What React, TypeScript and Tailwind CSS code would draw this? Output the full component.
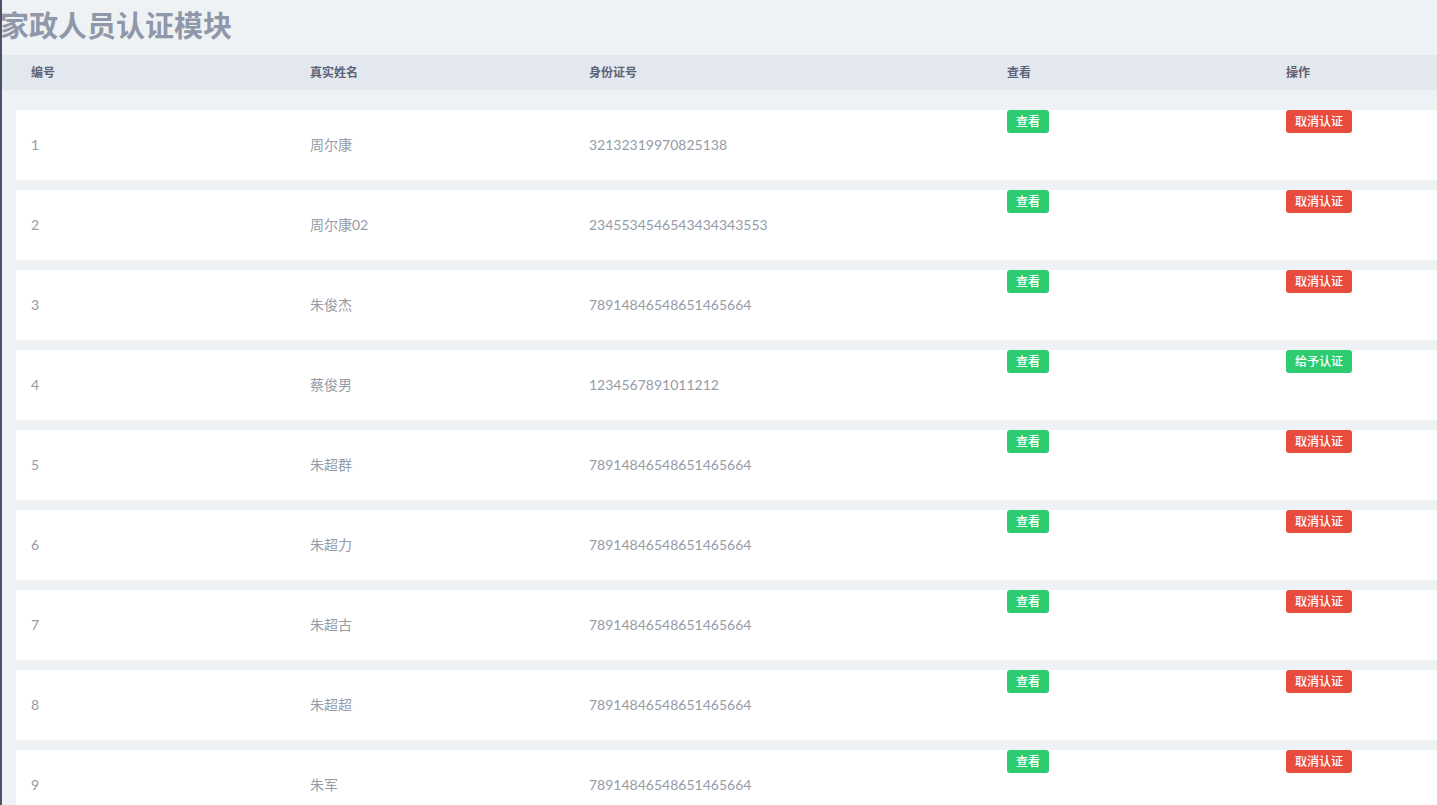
const rows = [
  { id: 1, name: '周尔康', card: '32132319970825138', ok: true },
  { id: 2, name: '周尔康02', card: '2345534546543434343553', ok: true },
  { id: 3, name: '朱俊杰', card: '78914846548651465664', ok: true },
  { id: 4, name: '蔡俊男', card: '1234567891011212', ok: false },
  { id: 5, name: '朱超群', card: '78914846548651465664', ok: true },
  { id: 6, name: '朱超力', card: '78914846548651465664', ok: true },
  { id: 7, name: '朱超古', card: '78914846548651465664', ok: true },
  { id: 8, name: '朱超超', card: '78914846548651465664', ok: true },
  { id: 9, name: '朱军', card: '78914846548651465664', ok: true },
];

const cols = 'grid grid-cols-[279px_279px_418px_279px_1fr]';

export default function App() {
  return (
    <div
      className="min-h-screen bg-[#eef2f5] border-l-2 border-[#4b5268] overflow-hidden"
      style={{ fontFamily: 'Lato, "Noto Sans CJK SC", sans-serif' }}
    >
      <h1 className="h-[55px] text-[29px] font-bold text-[#9097a8] leading-[52px] -ml-[2px]">
        家政人员认证模块
      </h1>

      {/* table head */}
      <div className={`${cols} h-[35px] items-center bg-[#e3e7ee] pl-[29px] text-xs font-bold text-[#5c6276]`}>
        <div>编号</div>
        <div>真实姓名</div>
        <div>身份证号</div>
        <div>查看</div>
        <div>操作</div>
      </div>

      <div className="flex flex-col gap-[10px] pt-5 pl-[14px]">
        {rows.map((r) => (
          <div key={r.id} className={`${cols} h-[70px] bg-white pl-[15px] text-sm text-[#969ba8]`}>
            <div className="self-center">{r.id}</div>
            <div className="self-center">{r.name}</div>
            <div className="self-center">{r.card}</div>
            <div>
              <button className="h-[23px] rounded-[3px] bg-[#2ecc71] px-[9px] text-xs font-medium text-white">查看</button>
            </div>
            <div>
              {r.ok ? (
                <button className="h-[23px] rounded-[3px] bg-[#e74c3c] px-[9px] text-xs font-medium text-white">取消认证</button>
              ) : (
                <button className="h-[23px] rounded-[3px] bg-[#2ecc71] px-[9px] text-xs font-medium text-white">给予认证</button>
              )}
            </div>
          </div>
        ))}
      </div>
    </div>
  );
}
